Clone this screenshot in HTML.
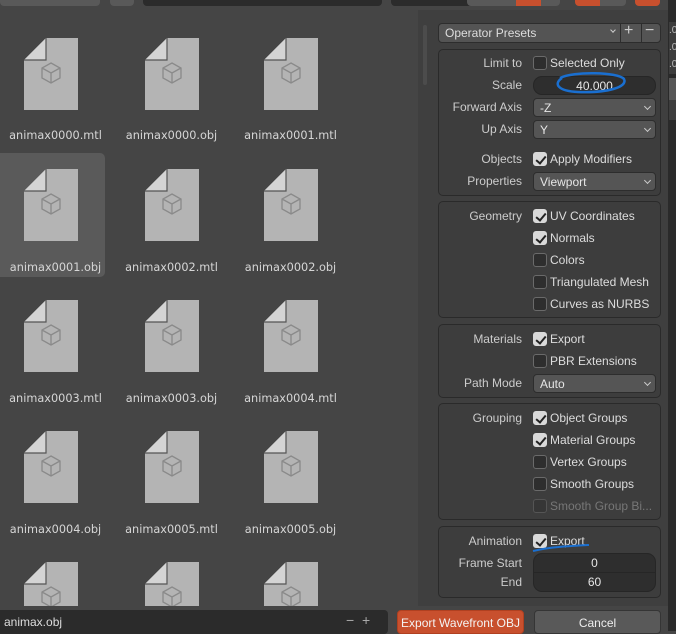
<!DOCTYPE html>
<html><head><meta charset="utf-8"><style>
*{box-sizing:border-box;margin:0;padding:0}
body{width:676px;height:631px;overflow:hidden;background:#454545;font-family:"Liberation Sans","DejaVu Sans",sans-serif;font-size:12px;color:#ddd;position:relative}
.a{position:absolute}
.lbl{position:absolute;width:119px;text-align:center;color:#d6d6d6;font-family:"DejaVu Sans",sans-serif;font-size:11.3px}
.pan{position:absolute;left:438px;width:223px;background:#3d3d3d;border:1px solid #2a2a2a;border-radius:5px}
.l{position:absolute;right:138px;width:100px;text-align:right;color:#ccc}
.cb{position:absolute;left:94px;width:14px;height:14px;border-radius:3px;border:1px solid #6a6a6a;background:#2e2e2e}
.cb.on{background:#d9d9d9;border-color:#d9d9d9}
.cb.on::after{content:"";position:absolute;left:4px;top:1px;width:4px;height:8px;border:solid #222;border-width:0 2px 2px 0;transform:rotate(40deg)}
.ct{position:absolute;left:111px;color:#ddd}
.dd{position:absolute;left:94px;width:123px;height:19px;background:#555;border:1px solid #2d2d2d;border-radius:4px;padding:2px 6px;color:#e6e6e6}
.dd::after{content:"";position:absolute;right:5px;top:5px;width:4px;height:4px;border:solid #ccc;border-width:0 1px 1px 0;transform:rotate(45deg)}
.num{position:absolute;left:94px;width:123px;height:19px;background:#2e2e2e;border:1px solid #262626;border-radius:9px;text-align:center;padding-top:2px;color:#e6e6e6}
</style></head><body>
<div class="a" style="left:0;top:0;width:100px;height:6px;background:#595959;border-radius:0 0 4px 4px"></div>
<div class="a" style="left:110px;top:0;width:24px;height:6px;background:#595959;border-radius:0 0 4px 4px"></div>
<div class="a" style="left:143px;top:0;width:239px;height:6px;background:#2b2b2b;border-radius:0 0 4px 4px"></div>
<div class="a" style="left:391px;top:0;width:97px;height:6px;background:#2b2b2b;border-radius:0 0 4px 4px"></div>
<div class="a" style="left:467px;top:0;width:93px;height:6px;background:#595959;border-radius:0 0 4px 4px"></div>
<div class="a" style="left:516px;top:0;width:25px;height:6px;background:#c8502e"></div>
<div class="a" style="left:575px;top:0;width:25px;height:6px;background:#c8502e;border-radius:0 0 0 4px"></div>
<div class="a" style="left:600px;top:0;width:26px;height:6px;background:#595959;border-radius:0 0 4px 0"></div>
<div class="a" style="left:635px;top:0;width:25px;height:6px;background:#c8502e;border-radius:0 0 4px 4px"></div>

<div class="a" style="left:418px;top:10px;width:250px;height:596px;background:#3f3f3f"></div>
<div class="a" style="left:423px;top:25px;width:4px;height:60px;background:#4c4c4c;border-radius:2px"></div>
<div class="a" style="left:668px;top:0;width:8px;height:631px;background:#2a2a2a"></div>
<div class="a" style="left:669px;top:22px;width:7px;height:52px;background:#3d3d3d;color:#bbb;font-size:10px;line-height:17px">.0<br>.0<br>.0</div>
<div class="a" style="left:669px;top:78px;width:7px;height:22px;background:#575757"></div>
<div class="a" style="left:669px;top:100px;width:7px;height:20px;background:#3d3d3d"></div>

<div class="a" style="left:0;top:153px;width:105px;height:124px;background:#5a5a5a;border-radius:0 5px 5px 0"></div>

<svg class="a" style="left:0;top:0" width="420" height="610">
<defs><g id="f">
<path d="M22 0H54V72H0V22Z" fill="#b4b4b4"/>
<path d="M22 0V22H0Z" fill="#d4d4d4"/>
<path d="M22 0V22H0" fill="none" stroke="#555" stroke-width="1.2"/>
<g fill="none" stroke="#8a8a8a" stroke-width="1.3"><path d="M27 25L36 30V40L27 45L18 40V30Z M18 30L27 35L36 30 M27 35V45"/></g>
</g></defs>
<use href="#f" x="24" y="38"/><use href="#f" x="145" y="38"/><use href="#f" x="264" y="38"/>
<use href="#f" x="24" y="169"/><use href="#f" x="145" y="169"/><use href="#f" x="264" y="169"/>
<use href="#f" x="24" y="300"/><use href="#f" x="145" y="300"/><use href="#f" x="264" y="300"/>
<use href="#f" x="24" y="431"/><use href="#f" x="145" y="431"/><use href="#f" x="264" y="431"/>
<use href="#f" x="24" y="562"/><use href="#f" x="145" y="562"/><use href="#f" x="264" y="562"/>
</svg>
<div class="lbl" style="left:-4px;top:129px">animax0000.mtl</div>
<div class="lbl" style="left:112px;top:129px">animax0000.obj</div>
<div class="lbl" style="left:231px;top:129px">animax0001.mtl</div>
<div class="lbl" style="left:-4px;top:261px">animax0001.obj</div>
<div class="lbl" style="left:112px;top:261px">animax0002.mtl</div>
<div class="lbl" style="left:231px;top:261px">animax0002.obj</div>
<div class="lbl" style="left:-4px;top:392px">animax0003.mtl</div>
<div class="lbl" style="left:112px;top:392px">animax0003.obj</div>
<div class="lbl" style="left:231px;top:392px">animax0004.mtl</div>
<div class="lbl" style="left:-4px;top:523px">animax0004.obj</div>
<div class="lbl" style="left:112px;top:523px">animax0005.mtl</div>
<div class="lbl" style="left:231px;top:523px">animax0005.obj</div>

<div class="a" style="left:0;top:606px;width:668px;height:25px;background:#454545"></div>
<div class="a" style="left:-4px;top:610px;width:392px;height:24px;background:#2b2b2b;border-radius:4px;padding:5px 8px;color:#ddd">animax.obj<span style="position:absolute;left:350px;top:2px;font-size:14px;color:#aaa">−&nbsp;&nbsp;+</span></div>
<div class="a" style="left:397px;top:610px;width:127px;height:24px;background:#c8502e;border:1px solid #b04020;border-radius:4px;text-align:center;padding-top:5px;color:#f4f4f4">Export Wavefront OBJ</div>
<div class="a" style="left:534px;top:610px;width:127px;height:24px;background:#595959;border:1px solid #353535;border-radius:4px;text-align:center;padding-top:5px;color:#eee">Cancel</div>

<div class="a" style="left:438px;top:23px;width:223px;height:20px;background:#545454;border:1px solid #2d2d2d;border-radius:4px"></div>
<div class="a" style="left:445px;top:26px;color:#ddd">Operator Presets</div>
<div class="a" style="left:611px;top:28px;width:4px;height:4px;border:solid #ccc;border-width:0 1px 1px 0;transform:rotate(45deg)"></div>
<div class="a" style="left:620px;top:23px;width:1px;height:20px;background:#2d2d2d"></div>
<div class="a" style="left:641px;top:23px;width:1px;height:20px;background:#2d2d2d"></div>
<div class="a" style="left:624px;top:22px;font-size:16px;color:#ccc">+</div>
<div class="a" style="left:645px;top:22px;font-size:16px;color:#ccc">−</div>

<div class="pan" style="top:49px;height:147px">
 <div class="l" style="top:6px">Limit to</div><div class="cb" style="top:6px"></div><div class="ct" style="top:6px">Selected Only</div>
 <div class="l" style="top:28px">Scale</div><div class="num" style="top:26px">40.000</div>
 <div class="l" style="top:50px">Forward Axis</div><div class="dd" style="top:48px">-Z</div>
 <div class="l" style="top:72px">Up Axis</div><div class="dd" style="top:70px">Y</div>
 <div class="l" style="top:102px">Objects</div><div class="cb on" style="top:102px"></div><div class="ct" style="top:102px">Apply Modifiers</div>
 <div class="l" style="top:124px">Properties</div><div class="dd" style="top:122px">Viewport</div>
</div>
<svg class="a" style="left:548px;top:70px" width="82" height="30"><path d="M12 8C25 1 70 2 76 9C80 17 60 23 30 22C10 21 5 14 14 8" fill="none" stroke="#1a6fd0" stroke-width="2.5"/></svg>

<div class="pan" style="top:201px;height:117px">
 <div class="l" style="top:7px">Geometry</div>
 <div class="cb on" style="top:7px"></div><div class="ct" style="top:7px">UV Coordinates</div>
 <div class="cb on" style="top:29px"></div><div class="ct" style="top:29px">Normals</div>
 <div class="cb" style="top:51px"></div><div class="ct" style="top:51px">Colors</div>
 <div class="cb" style="top:73px"></div><div class="ct" style="top:73px">Triangulated Mesh</div>
 <div class="cb" style="top:95px"></div><div class="ct" style="top:95px">Curves as NURBS</div>
</div>

<div class="pan" style="top:324px;height:74px">
 <div class="l" style="top:7px">Materials</div>
 <div class="cb on" style="top:7px"></div><div class="ct" style="top:7px">Export</div>
 <div class="cb" style="top:29px"></div><div class="ct" style="top:29px">PBR Extensions</div>
 <div class="l" style="top:51px">Path Mode</div><div class="dd" style="top:49px">Auto</div>
</div>

<div class="pan" style="top:403px;height:117px">
 <div class="l" style="top:7px">Grouping</div>
 <div class="cb on" style="top:7px"></div><div class="ct" style="top:7px">Object Groups</div>
 <div class="cb on" style="top:29px"></div><div class="ct" style="top:29px">Material Groups</div>
 <div class="cb" style="top:51px"></div><div class="ct" style="top:51px">Vertex Groups</div>
 <div class="cb" style="top:73px"></div><div class="ct" style="top:73px">Smooth Groups</div>
 <div class="cb" style="top:95px;border-color:#555;background:#363636"></div><div class="ct" style="top:95px;color:#777">Smooth Group Bi...</div>
</div>

<div class="pan" style="top:526px;height:72px">
 <div class="l" style="top:7px">Animation</div>
 <div class="cb on" style="top:7px"></div><div class="ct" style="top:7px">Export</div>
 <div class="l" style="top:29px">Frame Start</div>
 <div class="a" style="left:94px;top:26px;width:123px;height:39px;background:#2e2e2e;border:1px solid #262626;border-radius:9px"></div>
 <div class="a" style="left:94px;top:45px;width:123px;height:1px;background:#262626"></div>
 <div class="a" style="left:94px;top:29px;width:123px;text-align:center;color:#e6e6e6">0</div>
 <div class="a" style="left:94px;top:48px;width:123px;text-align:center;color:#e6e6e6">60</div>
 <div class="l" style="top:48px">End</div>
</div>
<svg class="a" style="left:530px;top:542px" width="62" height="12"><path d="M3 9C20 5 40 4 59 3" fill="none" stroke="#1a6fd0" stroke-width="2"/></svg>
</body></html>
